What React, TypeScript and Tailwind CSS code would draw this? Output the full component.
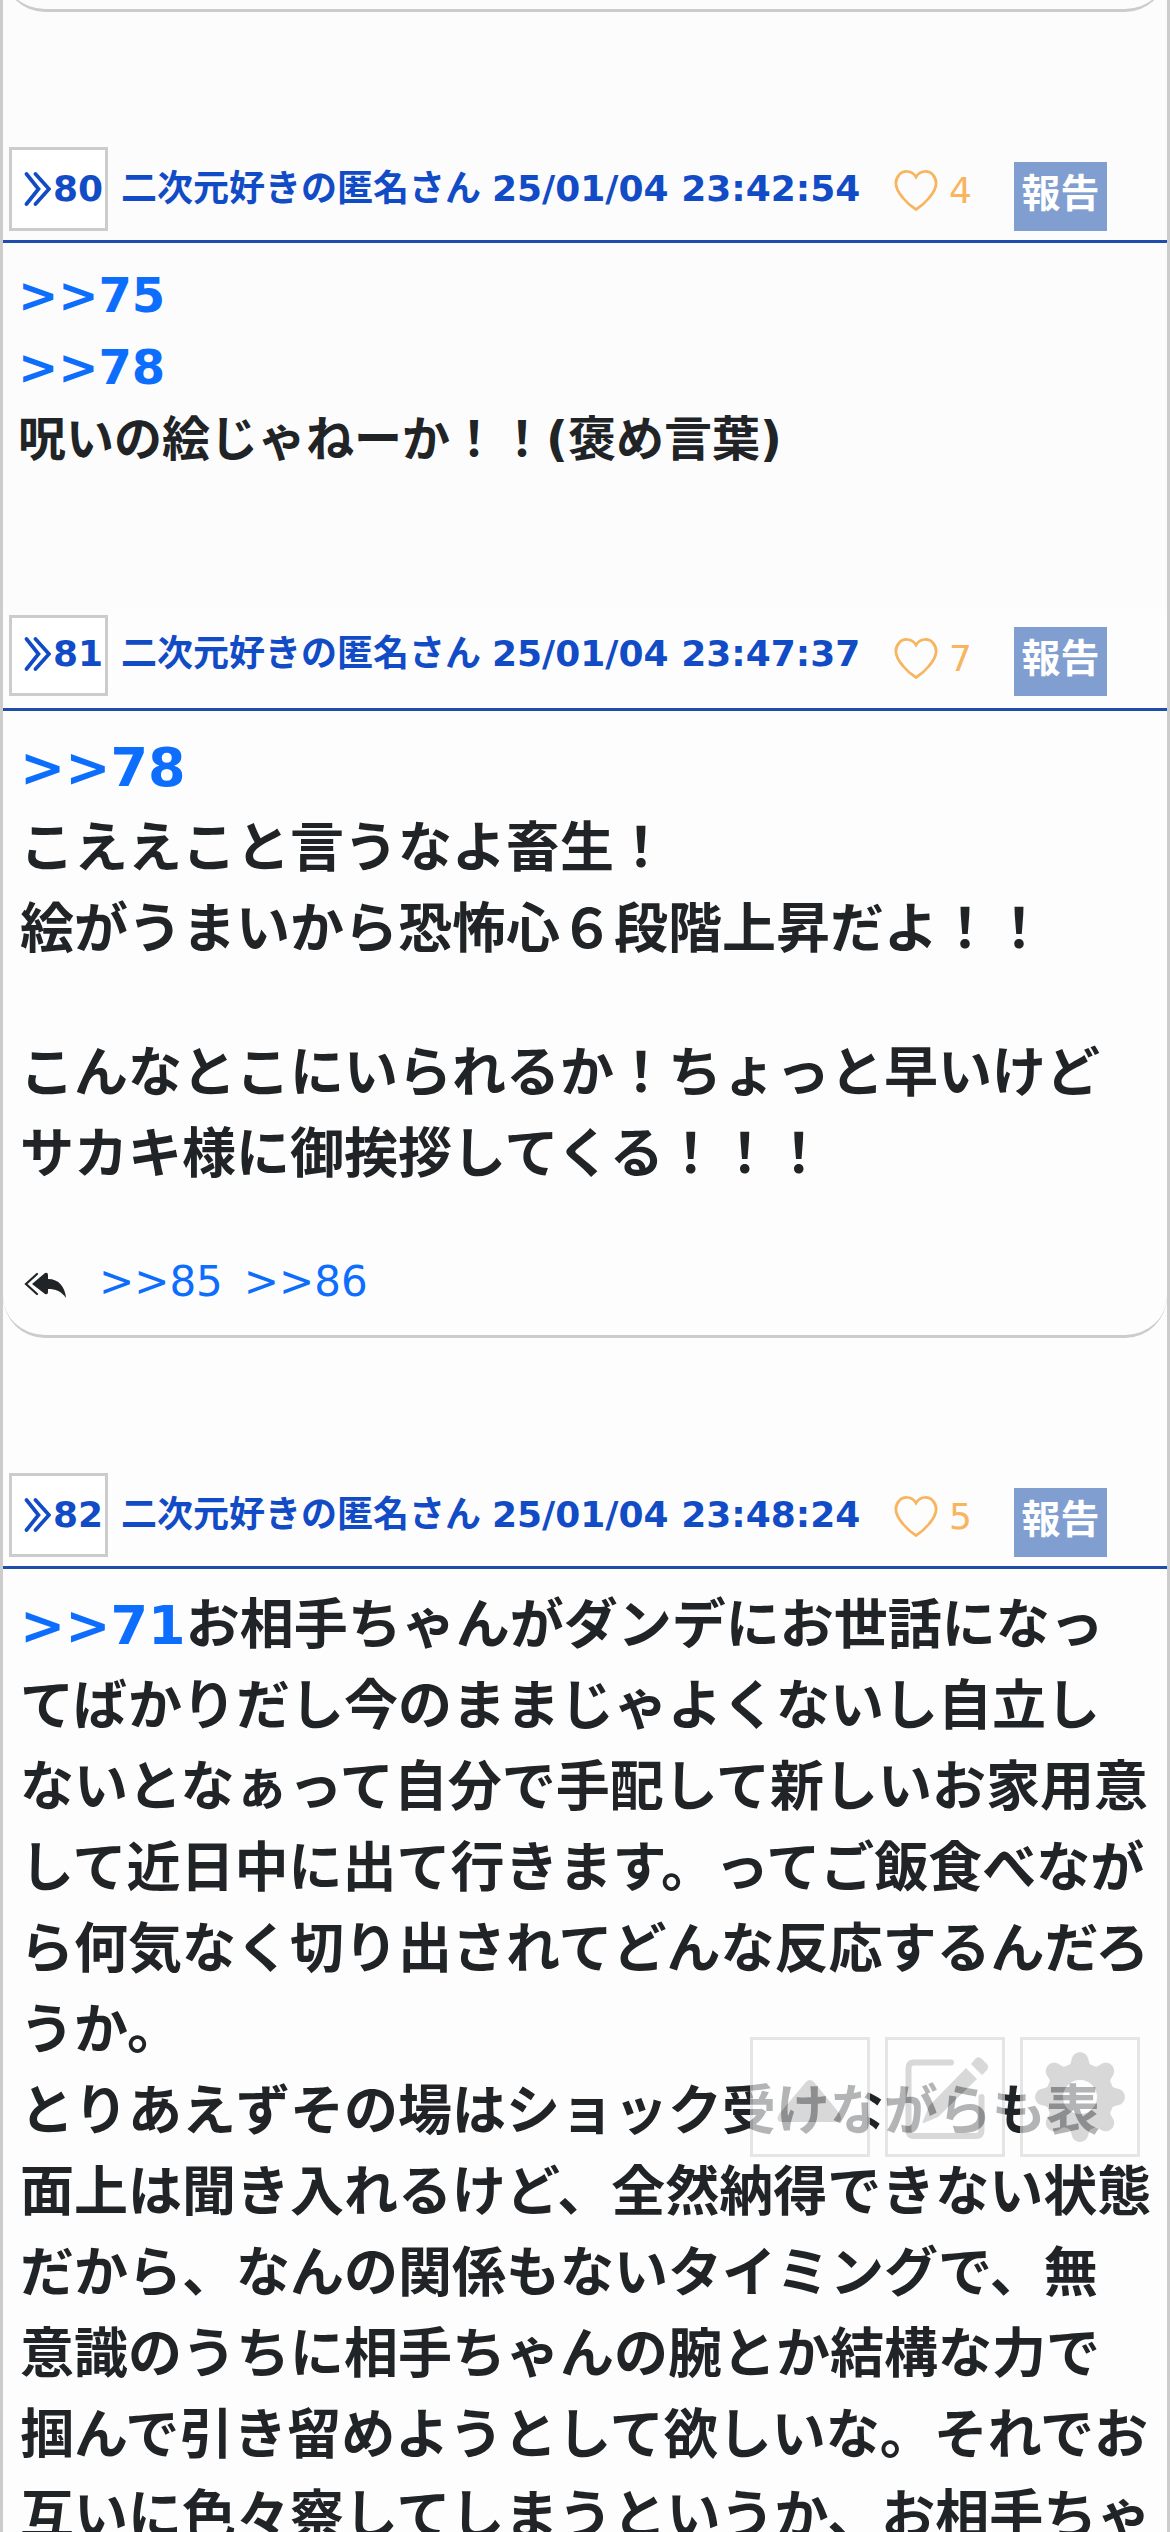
import type { ReactNode } from "react";

interface PostHeaderProps {
  id: number;
  date: string;
  likes: number;
  compact?: boolean;
}

function PostHeader({ id, date, likes, compact = false }: PostHeaderProps) {
  const rowHeight = compact ? "h-[81px] pb-[3px]" : "h-[84px]";

  return (
    <header className="flex h-[96px] items-start border-b-3 border-[#1f4dab] pl-1.5 text-[36px] leading-[36px] font-bold whitespace-nowrap text-[#124bc6]">
      <div className={`flex w-[99px] shrink-0 items-center border-3 border-[#ccc] bg-white pl-3 ${rowHeight}`}>
        <svg className="mr-0.5 h-9 w-[27px] shrink-0" viewBox="0 0 27 36" fill="none" stroke="currentColor" strokeWidth="3.700" strokeLinecap="round">
          <path d="M2.500 3 14.500 18 2.500 33M11.500 3 25 18 11.500 33" />
        </svg>
        {id}
      </div>
      <div className={`ml-[13px] flex w-[773px] shrink-0 items-center gap-[11px] ${rowHeight}`}>
        <span>二次元好きの匿名さん</span>
        <span>{date}</span>
      </div>
      <div className="mt-0.5 flex h-[84px] w-[120px] shrink-0 items-center gap-[11px] font-normal text-[#f8b45f]">
        <svg className="h-[42px] w-[44px]" viewBox="0 0 44 42" fill="none" stroke="currentColor" strokeWidth="2.700">
          <path d="M22 7C18 0 9 0 5 5C-1 12 3 21 9 28C13 33 18 37 22 39.500C26 37 31 33 35 28C41 21 45 12 39 5C35 0 26 0 22 7Z" />
        </svg>
        <span>{likes}</span>
      </div>
      <button
        className={`h-[69px] w-[93px] shrink-0 bg-[#809ecf] pb-1.5 text-center text-[39px] leading-[60px] font-bold text-white ${
          compact ? "mt-3" : "mt-[15px]"
        }`}
      >
        報告
      </button>
    </header>
  );
}

function Anchor({ children }: { children: ReactNode }) {
  return <a className="text-[#0d6efd]">{children}</a>;
}

const longPost = [
  "てばかりだし今のままじゃよくないし自立し",
  "ないとなぁって自分で手配して新しいお家用意",
  "して近日中に出て行きます。ってご飯食べなが",
  "ら何気なく切り出されてどんな反応するんだろ",
  "うか。",
  "とりあえずその場はショック受けながらも表",
  "面上は聞き入れるけど、全然納得できない状態",
  "だから、なんの関係もないタイミングで、無",
  "意識のうちに相手ちゃんの腕とか結構な力で",
  "掴んで引き留めようとして欲しいな。それでお",
  "互いに色々察してしまうというか、お相手ちゃ",
];

// eight rounded teeth around a ring
function GearIcon() {
  return (
    <svg className="size-[90px]" viewBox="0 0 90 90" fill="currentColor">
      <circle cx="45" cy="45" r="25.500" fill="none" stroke="currentColor" strokeWidth="17" />
      {[0, 45, 90, 135, 180, 225, 270, 315].map((angle) => (
        <path
          key={angle}
          d="M33 14C35 13 36 11 36.500 8C38-2.500 52-2.500 53.500 8C54 11 55 13 57 14L56 20H34Z"
          transform={`rotate(${angle} 45 45)`}
        />
      ))}
    </svg>
  );
}

function FloatingButtons() {
  return (
    <div className="absolute top-[2037px] left-[747px] flex gap-[15px] text-[#c6c6c6] opacity-[0.66]">
      <button className="flex size-[120px] items-center justify-center border-3 border-[#d9d9d9] bg-white">
        <svg className="size-[90px]" viewBox="0 0 90 90" fill="currentColor">
          <path d="M41 30Q45 26 49 30L75 62Q78 70 72 70H17Q10 70 14 62Z" />
        </svg>
      </button>
      <button className="flex size-[120px] items-center justify-center border-3 border-[#d9d9d9] bg-white">
        <svg className="size-[90px]" viewBox="0 0 90 90">
          <path d="M51 10.500H14Q8.500 10.500 8.500 16V78Q8.500 84 14 84H76Q81.500 84 81.500 78V45" fill="none" stroke="currentColor" strokeWidth="6" strokeLinecap="round" />
          <path d="M66 16 77 27 38 65 24 71Q22 71 23 69L29 54ZM71 12 76 6Q79 4 82 7L87 12Q89 15 87 18L82 23Z" fill="currentColor" />
        </svg>
      </button>
      <button className="flex size-[120px] items-center justify-center border-3 border-[#d9d9d9] bg-white">
        <GearIcon />
      </button>
    </div>
  );
}

export default function App() {
  return (
    <div className="relative h-[2532px] w-[1170px] overflow-hidden border-x-3 border-[#ccc] bg-[#fdfdfd] font-['DejaVu_Sans','Noto_Sans_CJK_JP',sans-serif] text-[#212426]" lang="ja">
      <div className="flow-root h-[615px] bg-[#fcfcfc]">
        <div className="-mt-20 h-[92px] rounded-b-[42px] border-b-3 border-[#ccc]" />
        <article className="pt-[135px]">
          <PostHeader id={80} date="25/01/04 23:42:54" likes={4} />
          <div className="pt-4 pl-[15px] text-[48px] leading-[72px] font-bold whitespace-nowrap">
            <p><Anchor>&gt;&gt;75</Anchor></p>
            <p><Anchor>&gt;&gt;78</Anchor></p>
            <p>呪いの絵じゃねーか！！(褒め言葉)</p>
          </div>
        </article>
      </div>

      <article className="h-[723px] rounded-b-[42px] border-b-3 border-[#ccc]">
        <PostHeader id={81} date="25/01/04 23:47:37" likes={7} compact />
        <div className="pt-4 pl-[17px] text-[54px] leading-[81px] font-bold whitespace-nowrap">
          <p><Anchor>&gt;&gt;78</Anchor></p>
          <p>こええこと言うなよ畜生！</p>
          <p>絵がうまいから恐怖心６段階上昇だよ！！</p>
          <p className="mt-[63px]">こんなとこにいられるか！ちょっと早いけど</p>
          <p>サカキ様に御挨拶してくる！！！</p>
        </div>
        <div className="mt-[55px] flex items-center pl-5 text-[42px] leading-[63px]">
          <svg className="mt-2 mr-8 h-[28px] w-[44px]" viewBox="0 0 44 28">
            <path d="M14 2 3 12 14 22" fill="none" stroke="currentColor" strokeWidth="2.200" strokeLinecap="round" />
            <path d="M9 12 22 1Q25 0 25 3V7C36 7 42 15 43 26C38 19 33 17 25 17V20Q25 23 22 22Z" fill="currentColor" />
          </svg>
          <Anchor>&gt;&gt;85</Anchor>
          <span className="ml-[21px]"><Anchor>&gt;&gt;86</Anchor></span>
        </div>
      </article>

      <article className="pt-[135px]">
        <PostHeader id={82} date="25/01/04 23:48:24" likes={5} />
        <div className="pt-4 pl-[17px] text-[54px] leading-[81px] font-bold whitespace-nowrap">
          <p><Anchor>&gt;&gt;71</Anchor>お相手ちゃんがダンデにお世話になっ</p>
          {longPost.map((line) => (
            <p key={line}>{line}</p>
          ))}
        </div>
      </article>

      <FloatingButtons />
    </div>
  );
}
